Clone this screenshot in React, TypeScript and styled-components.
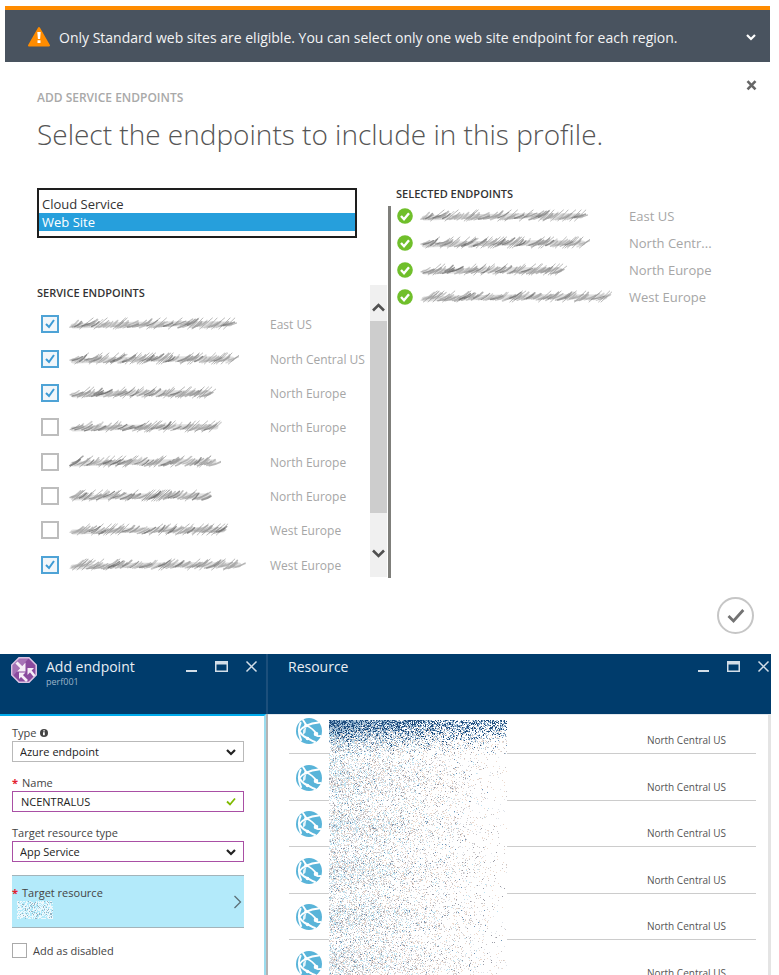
import React from 'react';
import styled, { createGlobalStyle, css } from 'styled-components';

const GlobalStyle = createGlobalStyle`
  *, *::before, *::after { box-sizing: border-box; }
  html, body { margin: 0; background: #fff; }
  body, button, input, select { font-family: "Open Sans", "Noto Sans", sans-serif; }
  button { border: 0; padding: 0; background: none; cursor: pointer; }
  ul { list-style: none; margin: 0; padding: 0; }
  svg { display: block; }
`;

/* ---------- page ---------- */

const Page = styled.div`
  display: flex;
  flex-direction: column;
  height: 100vh;
  min-height: 700px;
  overflow: hidden;
  padding: 6px 8px 0 0;
`;

const Banner = styled.header`
  display: flex;
  align-items: center;
  flex: none;
  height: 56px;
  margin-left: 5px;
  margin-right: 1px;
  padding: 2px 14px 0 22px;
  border-top: 4px solid #ff8c00;
  background: #49535f;
  color: #f3f4f5;
  font-size: 14px;
`;

const BannerText = styled.p`
  flex: 1;
  margin: 0 0 0 8px;
  white-space: nowrap;
`;

/* ---------- dialog ---------- */

const Dialog = styled.main`
  flex: none;
  padding: 16px 18px 20px 37px;
`;

const DialogTop = styled.div`
  display: flex;
  justify-content: space-between;
  align-items: flex-start;
  margin-right: -6px;
`;

const CloseButton = styled.button`
  padding: 2px;
`;

const Eyebrow = styled.div`
  margin-top: 12px;
  font-size: 12px;
  line-height: 16px;
  font-weight: 600;
  color: #a9a9a9;
`;

const Title = styled.h1`
  margin: 8px 0 0;
  font-size: 28px;
  line-height: 40px;
  font-weight: 300;
  color: #555;
  white-space: nowrap;
`;

const Columns = styled.div`
  display: flex;
  margin-top: 34px;
`;

const Available = styled.section`
  display: flex;
  flex-direction: column;
  width: 351px;
  flex: none;
`;

const TypeList = styled.select`
  width: 320px;
  height: 50px;
  padding: 5px 0 0;
  border: 2px solid #1e1e1e;
  border-radius: 0;
  background: #fff;
  overflow: hidden;
  outline: 0;
  font-size: 13px;

  option {
    height: 18px;
    min-height: 18px;
    padding: 0 3px;
    line-height: 18px;
    color: #333;
  }
  option:checked {
    background: #269fdc linear-gradient(#269fdc, #269fdc);
    color: #fff;
  }
`;

const AvailableBody = styled.div`
  display: flex;
  flex: 1;
  margin-top: 47px;
`;

const AvailableMain = styled.div`
  flex: 1;
`;

const SectionTitle = styled.h2`
  margin: 0;
  font-size: 11px;
  line-height: 16px;
  font-weight: 600;
  color: #333;
`;

const EndpointList = styled.ul`
  display: grid;
  grid-auto-rows: 1fr;
  height: 275px;
  margin-top: 6px;
`;

const EndpointRow = styled.li`
  display: grid;
  grid-template-columns: 32px 201px 1fr;
  align-items: center;
  white-space: nowrap;
`;

const Tick = styled.input<{ $small?: boolean }>`
  appearance: none;
  margin: 0 0 0 4px;
  width: 18px;
  height: 18px;
  border: 2px solid #bdbdbd;
  background: #fff center / 12px 12px no-repeat;
  &:checked {
    border-color: #4ea3d6;
    background-color: #f1f6fa;
    background-image: url("data:image/svg+xml,%3Csvg xmlns='http://www.w3.org/2000/svg' viewBox='0 0 12 12'%3E%3Cpath d='M2 6l3 3 5-7' fill='none' stroke='%233c9ad4' stroke-width='2'/%3E%3C/svg%3E");
  }
  ${(p) =>
    p.$small &&
    css`
      margin: 0;
      width: 15px;
      height: 15px;
      border: 1px solid #aaa;
    `}
`;

const Region = styled.span`
  padding-top: 2px;
  font-size: 12px;
  line-height: 16px;
  color: #a6a6a6;
`;

const ScrollTrack = styled.div`
  display: flex;
  flex-direction: column;
  width: 17px;
  height: 292px;
  margin-right: 1px;
  background: #f0f0f0;
`;

const ScrollArrow = styled.button<{ $down?: boolean }>`
  display: flex;
  justify-content: center;
  align-items: ${(p) => (p.$down ? 'flex-start' : 'flex-end')};
  height: ${(p) => (p.$down ? '64px' : '36px')};
  padding: ${(p) => (p.$down ? '36px 0 0' : '0 0 9px')};
`;

const ScrollThumb = styled.div`
  flex: 1;
  background: #cdcdcd;
`;

const Selected = styled.section`
  flex: 1;
  min-width: 0;
`;

const SelectedTitle = styled(SectionTitle)`
  margin-left: 8px;
  height: 18px;
  line-height: 12px;
`;

const SelectedList = styled.ul`
  height: 372px;
  padding-left: 6px;
  border-left: 3px solid #7f7f7b;
`;

const SelectedRow = styled.li`
  display: grid;
  grid-template-columns: 23px 209px 1fr;
  align-items: center;
  height: 27px;
  padding-bottom: 7px;
  white-space: nowrap;
`;

const SelectedRegion = styled(Region)`
  padding-top: 0;
  font-size: 13px;
`;

const Confirm = styled.div`
  display: flex;
  justify-content: flex-end;
  margin-top: 15px;
  margin-right: -1px;
`;

const RoundButton = styled.button`
  display: grid;
  place-items: center;
  width: 37px;
  height: 37px;
  border: 2px solid #c6c6c6;
  border-radius: 50%;
`;

/* ---------- blades ---------- */

const Blades = styled.div`
  display: flex;
  flex: 1;
  min-height: 0;
`;

const Blade = styled.section<{ $narrow?: boolean }>`
  display: flex;
  flex-direction: column;
  flex: ${(p) => (p.$narrow ? '0 0 268px' : '1')};
  min-width: 0;
`;

const BladeHeader = styled.header<{ $narrow?: boolean }>`
  display: flex;
  align-items: flex-start;
  flex: none;
  height: 60px;
  padding: ${(p) => (p.$narrow ? '3px 8px 0 11px' : '3px 1px 0 20px')};
  border-right: ${(p) => (p.$narrow ? '2px solid #1c4f7b' : '0')};
  background: #003c6c;
  color: #e9eef3;
`;

const BladeTitles = styled.div`
  flex: 1;
`;

const IconSlot = styled.div`
  width: 35px;
`;

const BladeTitle = styled.h2`
  margin: 0;
  font-size: 14px;
  line-height: 20px;
  font-weight: 400;
`;

const BladeSubtitle = styled.div`
  font-size: 9px;
  line-height: 10px;
  color: #9db4c8;
`;

const WindowButtons = styled.div`
  display: flex;
  gap: 17px;
  margin-top: 3px;
`;

const FormFrame = styled.div`
  display: flex;
  flex: 1;
  min-height: 0;
  border-right: 2px solid #b4b4b4;
`;

const Form = styled.form`
  flex: 1;
  min-width: 0;
  overflow: hidden;
  padding: 8px 20px 0 12px;
  border-top: 2px solid #00abec;
  border-right: 2px solid #9bdcee;
`;

const Label = styled.label`
  display: flex;
  align-items: center;
  gap: 4px;
  height: 17px;
  font-size: 11px;
  color: #444;
`;

const Required = styled.span`
  color: #e3202f;
  font-weight: 700;
`;

const Field = styled.div`
  margin-bottom: 12px;
`;

const SelectBox = styled.div<{ $accent?: boolean }>`
  display: grid;
  grid-template-columns: 1fr 24px;
  align-items: center;
  height: 21px;
  border: 1px solid ${(p) => (p.$accent ? '#a94fa5' : '#b9b9b9')};
  svg {
    grid-area: 1 / 2;
    justify-self: center;
    pointer-events: none;
  }
`;

const Dropdown = styled.select`
  appearance: none;
  grid-area: 1 / 1 / 2 / 3;
  height: 19px;
  padding: 0 24px 0 7px;
  border: 0;
  background: transparent;
  font-size: 11px;
  color: #222;
`;

const TextBox = styled.input`
  grid-area: 1 / 1 / 2 / 3;
  width: 100%;
  height: 19px;
  padding: 0 24px 0 8px;
  border: 0;
  background: transparent;
  font-size: 11px;
  color: #222;
`;

const ResourcePicker = styled.button`
  display: flex;
  align-items: center;
  width: 100%;
  height: 53px;
  margin: 13px 0 15px;
  padding-right: 2px;
  border-top: 1px solid #a3b4ba;
  border-bottom: 1px solid #a3b4ba;
  background: #b3eafa;
  text-align: left;
`;

const PickerText = styled.span`
  flex: 1;
  display: block;
`;

const PickerLabel = styled.span`
  display: flex;
  gap: 4px;
  font-size: 11px;
  line-height: 17px;
  color: #444;
`;

const PickerValue = styled.span`
  display: block;
  margin-left: 5px;
`;

const CheckLabel = styled.label`
  display: flex;
  align-items: center;
  gap: 6px;
  font-size: 11px;
  line-height: 12px;
  color: #444;
`;

const ResourceArea = styled.div`
  position: relative;
  flex: 1;
  min-height: 0;
  overflow: hidden;
  padding: 0 12px 0 21px;
  border-right: 3px solid #e4e4e4;
  border-top: 1px solid #e4e9ee;
`;

const ResourceRow = styled.li`
  display: flex;
  justify-content: space-between;
  align-items: flex-end;
  height: 46px;
  padding: 0 30px 7px 7px;
  border-bottom: 1px solid #ccc;
  font-size: 10px;
  line-height: 12px;
  color: #555;
  &:nth-child(even) {
    height: 47px;
  }
  &:first-child {
    height: 39px;
  }
`;

const RowIcon = styled.span`
  margin-bottom: 2px;
`;

const NoiseCover = styled.div`
  position: absolute;
  top: 5px;
  bottom: 0;
  left: 61px;
  background: #fff;
`;

/* ---------- drawings ---------- */

function seeded(seed: number) {
  let s = seed;
  return () => {
    s = (s * 1664525 + 1013904223) % 4294967296;
    return s / 4294967296;
  };
}

function Scribble({ width, seed }: { width: number; seed: number }) {
  const rnd = seeded(seed * 7919 + 13);
  const strokes: React.ReactElement[] = [];
  for (let x = 1; x < width - 10; x += 2.4) {
    const len = 6 + rnd() * 7;
    const y = 10 + rnd() * 3;
    const rise = 3 + rnd() * 4;
    strokes.push(
      <path
        key={x}
        d={`M${x.toFixed(1)} ${y.toFixed(1)}q${(len * 0.6).toFixed(1)} ${(-rise * 0.3).toFixed(1)} ${len.toFixed(1)} ${(-rise).toFixed(1)}`}
        stroke={rnd() > 0.72 ? '#6a6a6a' : '#a2a2a2'}
        strokeWidth={1 + rnd() * 0.8}
        opacity={0.4 + rnd() * 0.4}
      />,
    );
    if (rnd() > 0.75) {
      strokes.push(
        <path key={`t${x}`} d={`M${x.toFixed(1)} 14l${(10 + rnd() * 4).toFixed(1)} -11`} stroke="#8c8c8c" strokeWidth={1} opacity={0.6} />,
      );
    }
  }
  return (
    <svg width={width} height={18} viewBox={`0 0 ${width} 18`} fill="none" strokeLinecap="round" role="img" aria-label="Hidden name">
      <path d={`M4 11Q${width / 2} 8 ${width - 7} 9`} stroke="#c9c9c9" strokeWidth={5} opacity={0.6} />
      {strokes}
    </svg>
  );
}

const NOISE_COLORS = ['#1f4d7e', '#6d94b8', '#adc6db', '#9b9ca6', '#cbc7c9', '#bfe3f1', '#ecdbd0', '#e0e4ea'];

function buildNoise(w: number, h: number) {
  const rnd = seeded(4242);
  const d = NOISE_COLORS.map(() => '');
  for (let y = 0; y < h; y++) {
    for (let x = 0; x < w; x++) {
      const fade = Math.max(0, 1 - x / w);
      const top = Math.max(0, 1 - y / 36);
      const band = 0.8 + 0.2 * Math.cos(((y - 58) / 46) * 2 * Math.PI);
      const p = top * 0.55 + (0.03 + 0.62 * Math.pow(fade, 1.1)) * band;
      if (rnd() > p) continue;
      let c: number;
      if (rnd() < top * 1.1) c = rnd() < top * 0.45 ? 0 : rnd() < 0.45 ? 1 : 2;
      else {
        const r = rnd();
        if (r < 0.03) c = 1;
        else if (r < 0.11) c = 3;
        else if (r < 0.34) c = 4;
        else if (r < 0.34 + 0.28 * fade) c = 5;
        else if (r < 0.74) c = 6;
        else c = 7;
      }
      d[c] += `M${x} ${y}h1v1h-1z`;
    }
  }
  return d;
}

const NOISE = buildNoise(178, 256);

const Noise = () => (
  <svg width={178} height={256} viewBox="0 0 178 256" shapeRendering="crispEdges" role="img" aria-label="Hidden resource names">
    {NOISE.map((d, i) => (
      <path key={i} d={d} fill={NOISE_COLORS[i]} />
    ))}
  </svg>
);

function SmallNoise() {
  const rnd = seeded(99);
  let white = '';
  let grey = '';
  for (let y = 0; y < 18; y++) {
    for (let x = 0; x < 36; x++) {
      const r = rnd();
      if (r < 0.48) white += `M${x} ${y}h1v1h-1z`;
      else if (r < 0.6) grey += `M${x} ${y}h1v1h-1z`;
    }
  }
  return (
    <svg width={36} height={18} viewBox="0 0 36 18" shapeRendering="crispEdges">
      <path d={white} fill="#eef8fc" />
      <path d={grey} fill="#94b4c4" />
    </svg>
  );
}

const WarningIcon = () => (
  <svg width={24} height={22} viewBox="0 0 24 22">
    <path d="M12 2L22 19.500H2z" fill="#ff8c00" stroke="#ff8c00" strokeWidth={2} strokeLinejoin="round" />
    <path d="M10.300 6h3.400l-.6 7h-2.200zM10.500 14.200h3V17h-3z" fill="#fff" />
  </svg>
);

const Chevron = ({ color, w = 10 }: { color: string; w?: number }) => (
  <svg width={w} height={w} viewBox="0 0 10 10" fill="none" stroke={color} strokeWidth={2.200}>
    <path d="M1 3l4 4 4-4" />
  </svg>
);

const ScrollChevron = ({ down }: { down?: boolean }) => (
  <svg width={13} height={10} viewBox="0 0 13 10" fill="none" stroke="#505050" strokeWidth={2.6}>
    <path d={down ? 'M1 1.500l5.500 5.500 5.500-5.500' : 'M1 8.500l5.500-5.500 5.500 5.500'} />
  </svg>
);

const CrossIcon = () => (
  <svg width={11} height={11} viewBox="0 0 11 11" stroke="#666" strokeWidth={2.600}>
    <path d="M1.500 1.200l8 8.200M9.500 1.200l-8 8.200" />
  </svg>
);

const CheckCircle = () => (
  <svg width={16} height={16} viewBox="0 0 16 16">
    <circle cx={8} cy={8} r={7.800} fill="#70bf2b" />
    <path d="M4 8l3 3.200 5-6" fill="none" stroke="#fff" strokeWidth={2.400} />
  </svg>
);

const BigCheck = () => (
  <svg width={18} height={16} viewBox="0 0 18 16" fill="none" stroke="#737373" strokeWidth={2.800}>
    <path d="M1.500 8l5 5L16.300 2" />
  </svg>
);

const ProfileIcon = () => (
  <svg width={26} height={26} viewBox="0 0 26 26">
    <path d="M8 .8h10L25.200 8v10L18 25.200H8L.8 18V8z" fill="#8a4a9e" />
    <path d="M8 1h10L2 19V8z" fill="#a673b6" />
    <path d="M8 .8h10L25.200 8v10L18 25.200H8L.8 18V8z" fill="none" stroke="#dcc3e3" strokeWidth={1.600} />
    <g stroke="#f5eef7" fill="none">
      <path d="M5.500 5.500l6 6" strokeWidth={3} />
      <path d="M10 18l6 6" strokeWidth={2.600} />
      <path d="M19.500 14l4 5" strokeWidth={2.600} />
    </g>
    <path d="M14.500 5.500v9H6z" fill="#f5eef7" />
    <path d="M8 22v-6.500h6.500z" fill="#f5eef7" />
    <path d="M16.500 18v-7H23z" fill="#f5eef7" />
  </svg>
);

const GlobeIcon = () => (
  <svg width={26} height={26} viewBox="0 0 26 26">
    <circle cx={13} cy={13} r={13} fill="#59b4d9" />
    <g fill="none" stroke="#fff" strokeLinecap="round">
      <path d="M4.500 5C2.200 10 2.500 16 5 22" strokeWidth={2} />
      <path d="M3.500 13C7 8.500 12 5.500 22.500 4.500" strokeWidth={2} />
      <path d="M7 2l3.500 5.500C15 9.500 18 12 20 15.500" strokeWidth={1.900} />
      <path d="M3.500 13.500c2 3.500 4 5 7.500 6.500 3 1.500 4 2.500 8 4" strokeWidth={2} />
      <path d="M19.500 15.500c.5 2.500 2.500 3 5 2.500" strokeWidth={1.800} />
    </g>
    <path d="M7 12.500c1-2 2-3 3.500-3.500-.8 2-.7 3.500-1 5.500L7 17z" fill="#fff" opacity={0.85} />
    <circle cx={20} cy={16} r={2.300} fill="#fff" />
    <circle cx={10} cy={7.500} r={1.800} fill="#fff" />
    <circle cx={11.500} cy={20.500} r={1.800} fill="#fff" />
  </svg>
);

const InfoIcon = () => (
  <svg width={8} height={8} viewBox="0 0 8 8">
    <circle cx={4} cy={4} r={4} fill="#444" />
    <path d="M3.300 1.200h1.500v1.300H3.300zM3 3.200h1.800v3H3z" fill="#fff" />
  </svg>
);

const GreenTick = () => (
  <svg width={10} height={9} viewBox="0 0 10 9" fill="none" stroke="#7fba00" strokeWidth={1.800}>
    <path d="M1 4.500L4 7.500 9 1.500" />
  </svg>
);

const RightChevron = () => (
  <svg width={9} height={14} viewBox="0 0 9 14" fill="none" stroke="#5d7076" strokeWidth={1.300}>
    <path d="M1.500 1l6 6-6 6" />
  </svg>
);

const MinimizeIcon = () => (
  <svg width={13} height={13} viewBox="0 0 13 13">
    <path d="M1 10h11v2H1z" fill="#d3dee8" />
  </svg>
);

const MaximizeIcon = () => (
  <svg width={13} height={13} viewBox="0 0 13 13">
    <path d="M0 1h13v11H0zM1.500 4.500v6h10v-6z" fillRule="evenodd" fill="#d3dee8" />
  </svg>
);

const WindowClose = () => (
  <svg width={13} height={13} viewBox="0 0 13 13" stroke="#d3dee8" strokeWidth={1.500}>
    <path d="M1.500 1.500l10 10M11.500 1.500l-10 10" />
  </svg>
);

/* ---------- data ---------- */

const ENDPOINTS = [
  { width: 168, region: 'East US', on: true },
  { width: 170, region: 'North Central US', on: true },
  { width: 147, region: 'North Europe', on: true },
  { width: 154, region: 'North Europe', on: false },
  { width: 152, region: 'North Europe', on: false },
  { width: 146, region: 'North Europe', on: false },
  { width: 161, region: 'West Europe', on: false },
  { width: 177, region: 'West Europe', on: true },
];

const SELECTED = [
  { width: 168, region: 'East US' },
  { width: 170, region: 'North Centr...' },
  { width: 147, region: 'North Europe' },
  { width: 192, region: 'West Europe' },
];

const RESOURCES = Array.from({ length: 6 }, () => 'North Central US');

const WindowControls = () => (
  <WindowButtons>
    <button type="button" aria-label="Minimize"><MinimizeIcon /></button>
    <button type="button" aria-label="Maximize"><MaximizeIcon /></button>
    <button type="button" aria-label="Close"><WindowClose /></button>
  </WindowButtons>
);

export default function App() {
  return (
    <>
      <GlobalStyle />
      <Page>
        <Banner>
          <WarningIcon />
          <BannerText>Only Standard web sites are eligible. You can select only one web site endpoint for each region.</BannerText>
          <button type="button" aria-label="Collapse"><Chevron color="#fff" /></button>
        </Banner>

        <Dialog>
          <DialogTop>
            <Eyebrow>ADD SERVICE ENDPOINTS</Eyebrow>
            <CloseButton type="button" aria-label="Close dialog"><CrossIcon /></CloseButton>
          </DialogTop>
          <Title>Select the endpoints to include in this profile.</Title>
          <Columns>
            <Available>
              <TypeList size={2} defaultValue="web" aria-label="Service type">
                <option value="cloud">Cloud Service</option>
                <option value="web">Web Site</option>
              </TypeList>
              <AvailableBody>
                <AvailableMain>
                  <SectionTitle>SERVICE ENDPOINTS</SectionTitle>
                  <EndpointList>
                    {ENDPOINTS.map((e, i) => (
                      <EndpointRow key={i}>
                        <Tick type="checkbox" defaultChecked={e.on} aria-label={`Endpoint ${i + 1}, ${e.region}`} />
                        <Scribble width={e.width} seed={i + 1} />
                        <Region>{e.region}</Region>
                      </EndpointRow>
                    ))}
                  </EndpointList>
                </AvailableMain>
                <ScrollTrack>
                  <ScrollArrow type="button" aria-label="Scroll up"><ScrollChevron /></ScrollArrow>
                  <ScrollThumb />
                  <ScrollArrow type="button" $down aria-label="Scroll down"><ScrollChevron down /></ScrollArrow>
                </ScrollTrack>
              </AvailableBody>
            </Available>
            <Selected>
              <SelectedTitle>SELECTED ENDPOINTS</SelectedTitle>
              <SelectedList>
                {SELECTED.map((e, i) => (
                  <SelectedRow key={i}>
                    <CheckCircle />
                    <Scribble width={e.width} seed={i === 3 ? 8 : i + 1} />
                    <SelectedRegion>{e.region}</SelectedRegion>
                  </SelectedRow>
                ))}
              </SelectedList>
            </Selected>
          </Columns>
          <Confirm>
            <RoundButton type="button" aria-label="Complete"><BigCheck /></RoundButton>
          </Confirm>
        </Dialog>

        <Blades>
          <Blade $narrow>
            <BladeHeader $narrow>
              <IconSlot><ProfileIcon /></IconSlot>
              <BladeTitles>
                <BladeTitle>Add endpoint</BladeTitle>
                <BladeSubtitle>perf001</BladeSubtitle>
              </BladeTitles>
              <WindowControls />
            </BladeHeader>
            <FormFrame>
              <Form>
                <Field>
                  <Label htmlFor="type">Type <InfoIcon /></Label>
                  <SelectBox>
                    <Dropdown id="type"><option>Azure endpoint</option></Dropdown>
                    <Chevron color="#222" />
                  </SelectBox>
                </Field>
                <Field>
                  <Label htmlFor="name"><Required>*</Required> Name</Label>
                  <SelectBox $accent>
                    <TextBox id="name" defaultValue="NCENTRALUS" />
                    <GreenTick />
                  </SelectBox>
                </Field>
                <Field>
                  <Label htmlFor="target">Target resource type</Label>
                  <SelectBox $accent>
                    <Dropdown id="target"><option>App Service</option></Dropdown>
                    <Chevron color="#222" />
                  </SelectBox>
                </Field>
                <ResourcePicker type="button">
                  <PickerText>
                    <PickerLabel><Required>*</Required> Target resource</PickerLabel>
                    <PickerValue><SmallNoise /></PickerValue>
                  </PickerText>
                  <RightChevron />
                </ResourcePicker>
                <CheckLabel><Tick $small type="checkbox" />Add as disabled</CheckLabel>
              </Form>
            </FormFrame>
          </Blade>

          <Blade>
            <BladeHeader>
              <BladeTitles><BladeTitle>Resource</BladeTitle></BladeTitles>
              <WindowControls />
            </BladeHeader>
            <ResourceArea>
              <ul>
                {RESOURCES.map((r, i) => (
                  <ResourceRow key={i}>
                    <RowIcon><GlobeIcon /></RowIcon>
                    <span>{r}</span>
                  </ResourceRow>
                ))}
              </ul>
              <NoiseCover><Noise /></NoiseCover>
            </ResourceArea>
          </Blade>
        </Blades>
      </Page>
    </>
  );
}
